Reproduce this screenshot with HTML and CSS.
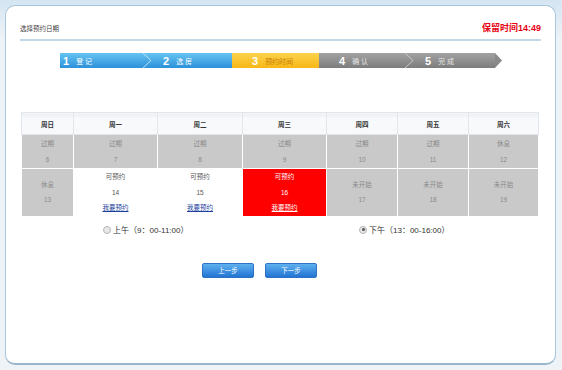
FILE: index.html
```html
<!DOCTYPE html>
<html lang="zh-CN">
<head>
  <meta charset="UTF-8" />
  <title>选择预约日期</title>
  <link rel="stylesheet" href="styles.css">
</head>
<body>

<div class="panel">
  <div class="head">
    <div class="title">选择预约日期</div>
    <div class="timer">保留时间14:49</div>
  </div>

  <div class="steps">
    <div class="step s1"><span class="num">1</span><span class="label">登 记</span></div>
    <div class="step s2">
      <svg class="chev" width="9" height="15" viewBox="0 0 9 15"><polyline points="0,0 8,7.5 0,15" fill="none" stroke="#bfe3f8" stroke-width="1"/></svg>
      <span class="num">2</span><span class="label">选 房</span>
    </div>
    <div class="step s3"><span class="num">3</span><span class="label">预约时间</span></div>
    <div class="step s4"><span class="num">4</span><span class="label">确 认</span></div>
    <div class="step s5">
      <svg class="chev" width="9" height="15" viewBox="0 0 9 15"><polyline points="0,0 8,7.5 0,15" fill="none" stroke="#c9c9c9" stroke-width="1"/></svg>
      <span class="num">5</span><span class="label">完 成</span>
    </div>
    <svg class="tip" width="7" height="15" viewBox="0 0 7 15"><polygon points="0,0 7,7.5 0,15" fill="#8a8a8a"/></svg>
  </div>

  <table class="cal">
    <tr class="hd">
      <th class="c0">周日</th><th class="c1">周一</th><th class="c2">周二</th><th class="c3">周三</th><th class="c4">周四</th><th class="c5">周五</th><th class="c6">周六</th>
    </tr>
    <tr class="r1">
      <td>过期<br>6</td><td>过期<br>7</td><td>过期<br>8</td><td>过期<br>9</td><td>过期<br>10</td><td>过期<br>11</td><td>休息<br>12</td>
    </tr>
    <tr class="r2">
      <td>休息<br>13</td>
      <td class="open">可预约<br>14<br><a href="#">我要预约</a></td>
      <td class="open">可预约<br>15<br><a href="#">我要预约</a></td>
      <td class="picked">可预约<br>16<br><a href="#">我要预约</a></td>
      <td>未开始<br>17</td><td>未开始<br>18</td><td>未开始<br>19</td>
    </tr>
  </table>

  <div class="times">
    <label class="opt"><span class="radio"></span>上午（9：00-11:00）</label>
    <label class="opt"><span class="radio on"></span>下午（13：00-16:00）</label>
  </div>

  <div class="actions">
    <button class="btn">上一步</button>
    <button class="btn">下一步</button>
  </div>
</div>

</body>
</html>
```

FILE: styles.css
```css
body {
  margin: 0;
  padding: 5px 6px 0 5px;
  font-family: "Liberation Sans", "Noto Sans CJK SC", sans-serif;
  background: linear-gradient(#d4e5f2, #eef3f7 40px);
  height: 370px;
  box-sizing: border-box;
}

.panel {
  height: 360px;
  box-sizing: border-box;
  background: white;
  border: 1px solid #a9c6da;
  border-bottom: 2px solid #98b6cc;
  border-radius: 10px;
  padding: 0 14px;
}

.head {
  height: 35px;
  box-sizing: border-box;
  padding-top: 10px;
  display: flex;
  align-items: center;
  justify-content: space-between;
  border-bottom: 2px solid #c3d8e7;
}

.title {
  font-size: 6.5px;
  color: #444;
}

.timer {
  font-size: 9px;
  font-weight: bold;
  color: #e60012;
}

.steps {
  display: flex;
  margin: 12px 0 0 40px;
  height: 15px;
}

.step {
  display: flex;
  align-items: center;
  height: 15px;
  box-sizing: border-box;
  padding-left: 20px;
  color: white;
}

.step .num {
  font-size: 11px;
  font-weight: bold;
}

.step .label {
  font-size: 7px;
  margin-left: 7px;
}

.s1 { width: 83px; padding-left: 3px; }
.s2 { width: 89px; padding-left: 0; }
.s3 { width: 87px; }
.s4 { width: 86px; }
.s5 { width: 90px; padding-left: 0; }

.s1, .s2 {
  background: linear-gradient(#66c3f1, #2c91da);
}

.s3 {
  background: linear-gradient(#fdd34c, #f7b716);
}

.s3 .label {
  color: #c77d06;
}

.s4, .s5 {
  background: linear-gradient(#a2a2a2, #7d7d7d);
}

.s4 .label, .s5 .label {
  color: #e6e6e6;
}

.chev {
  margin-right: 11px;
  flex-shrink: 0;
}

.tip {
  display: block;
}

.cal {
  margin: 44px 0 0 1px;
  border-collapse: collapse;
  font-size: 6.5px;
  text-align: center;
  width: 517px;
  table-layout: fixed;
}

.cal th {
  height: 21px;
  padding: 0;
  color: #333;
  font-weight: bold;
  background: linear-gradient(#eceff3, #f8f9fb 5px);
  border: 1px solid #e2e6eb;
}

.c0 { width: 51px; }
.c1 { width: 83px; }
.c2 { width: 84px; }
.c3 { width: 83px; }
.c4 { width: 70px; }
.c5 { width: 70px; }
.c6 { width: 69px; }

.cal td {
  padding: 0;
  background: #c9c9c9;
  color: #8a8a8a;
  border: 1px solid #ffffff;
  line-height: 16px;
}

.r1 td { height: 33px; }
.r2 td { height: 46px; line-height: 15.5px; }

.cal td.open {
  background: white;
  color: #555;
}

.cal td.picked {
  background: #ff0000;
  color: white;
}

.cal a {
  color: #1d3f9e;
}

.cal .picked a {
  color: white;
}

.times {
  display: flex;
  width: 517px;
  margin: 6px 0 0 1px;
  font-size: 8px;
  color: #333;
}

.opt {
  flex: 1;
  display: flex;
  align-items: center;
  justify-content: center;
  padding-right: 9px;
  height: 14px;
}

.radio {
  width: 6px;
  height: 6px;
  border: 1px solid #b5b5b5;
  border-radius: 50%;
  background: #e8e8e8;
  margin-right: 2px;
  display: flex;
  align-items: center;
  justify-content: center;
}

.radio.on::after {
  content: "";
  width: 3px;
  height: 3px;
  border-radius: 50%;
  background: #555;
}

.actions {
  display: flex;
  gap: 11px;
  margin: 26px 0 0 182px;
}

.btn {
  width: 52px;
  height: 15px;
  padding: 0;
  border: 1px solid #2f72c4;
  border-radius: 2px;
  background: linear-gradient(#5fb0ef, #2274d3);
  color: white;
  font-family: inherit;
  font-size: 6.5px;
}
```
